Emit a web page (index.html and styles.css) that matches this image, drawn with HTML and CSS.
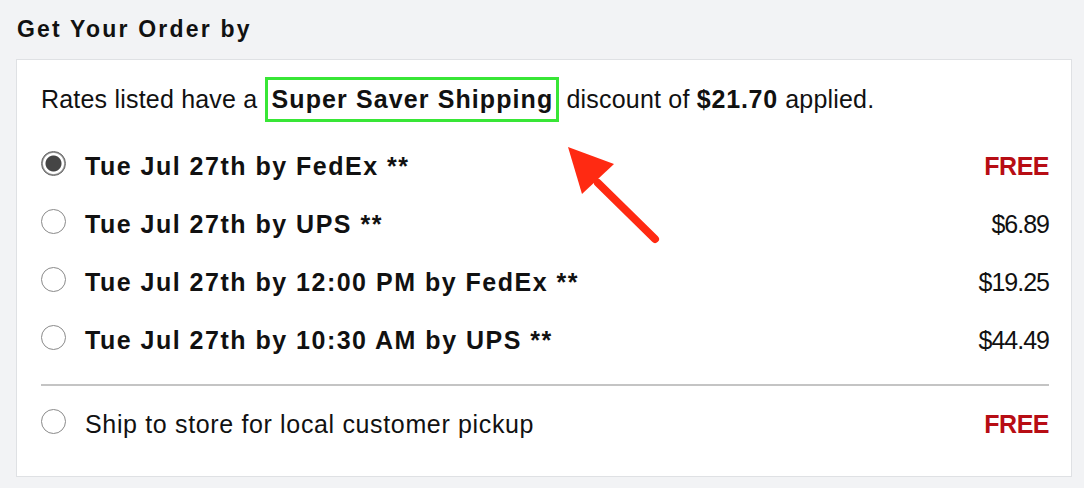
FILE: index.html
```html
<!DOCTYPE html>
<html lang="en">
<head>
  <meta charset="UTF-8">
  <meta name="viewport" content="width=device-width, initial-scale=1.0">
  <title>Get Your Order by</title>
  <link rel="stylesheet" href="styles.css">
</head>
<body>

  <h1 class="title">Get Your Order by</h1>

  <div class="card">
    <p class="note">Rates listed have a <span class="highlight">Super Saver Shipping</span> discount of <b>$21.70</b> applied.</p>

    <div class="options">
      <label class="option">
        <span class="radio checked"></span>
        <span class="name strong">Tue Jul 27th by FedEx **</span>
        <span class="price free">FREE</span>
      </label>
      <label class="option">
        <span class="radio"></span>
        <span class="name strong">Tue Jul 27th by UPS **</span>
        <span class="price">$6.89</span>
      </label>
      <label class="option">
        <span class="radio"></span>
        <span class="name strong">Tue Jul 27th by 12:00 PM by FedEx **</span>
        <span class="price">$19.25</span>
      </label>
      <label class="option">
        <span class="radio"></span>
        <span class="name strong">Tue Jul 27th by 10:30 AM by UPS **</span>
        <span class="price">$44.49</span>
      </label>
    </div>

    <div class="options pickup">
      <label class="option">
        <span class="radio"></span>
        <span class="name">Ship to store for local customer pickup</span>
        <span class="price free">FREE</span>
      </label>
    </div>
  </div>

  <!-- annotation arrow -->
  <svg class="arrow" width="110" height="110" viewBox="0 0 110 110">
    <line x1="30" y1="36" x2="87" y2="92" stroke="#ff2a12" stroke-width="8" stroke-linecap="round"/>
    <polygon points="0,0 46,17 14,47" fill="#ff2a12"/>
  </svg>

</body>
</html>
```

FILE: styles.css
```css
body {
  margin: 0;
  background-color: #f2f3f5;
  font-family: "Liberation Sans", Arial, sans-serif;
  color: #111;
  position: relative;
  height: 488px;
  overflow: hidden;
}

.title {
  margin: 0;
  padding: 15px 0 0 17px;
  height: 59px;
  box-sizing: border-box;
  font-size: 23px;
  font-weight: bold;
  letter-spacing: 2.2px;
  line-height: 28px;
}

.card {
  margin: 0 12px 0 16px;
  height: 418px;
  box-sizing: border-box;
  background-color: #fff;
  border: 1px solid #dfe1e4;
  padding: 0 22px 0 24px;
}

.note {
  margin: 0;
  padding-top: 17px;
  height: 77px;
  box-sizing: border-box;
  font-size: 25px;
  line-height: 45px;
  letter-spacing: 0.2px;
}

.highlight {
  display: inline-block;
  border: 3px solid #38e636;
  padding: 0 3px 0 4px;
  line-height: 39px;
  font-weight: bold;
  letter-spacing: 1.1px;
}

.note b {
  letter-spacing: 0.8px;
}

.options {
  border-bottom: 2px solid #c4c4c4;
  padding-bottom: 15px;
}

.pickup {
  border-bottom: none;
  padding: 9px 0 0;
}

.option {
  display: flex;
  align-items: center;
  height: 58px;
  font-size: 25px;
}

.radio {
  width: 23px;
  height: 23px;
  border: 1px solid #8a8a8a;
  border-radius: 50%;
  margin: 0 19px 0 0;
  flex-shrink: 0;
  position: relative;
  top: -3px;
  background: #fff;
}

.radio.checked {
  background: radial-gradient(circle, #454545 0, #454545 7.5px, #fff 8.5px, #fff 10px, #999 11px);
  border-color: #666;
}

.name {
  flex: 1;
  letter-spacing: 0.65px;
}

.strong {
  font-weight: bold;
  letter-spacing: 1.5px;
}

.price {
  letter-spacing: -1px;
}

.price.free {
  color: #b70d14;
  font-weight: bold;
  letter-spacing: -0.5px;
}

.arrow {
  position: absolute;
  left: 568px;
  top: 147px;
}
```
